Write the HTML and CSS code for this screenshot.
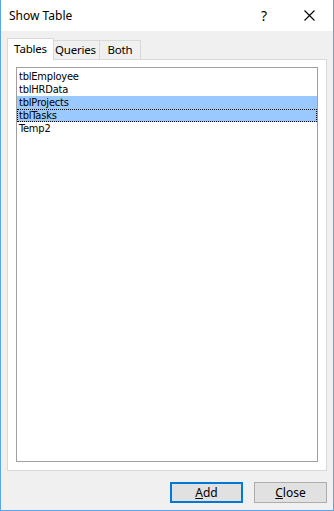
FILE: index.html
```html
<!DOCTYPE html>
<html lang="en">
<head>
    <meta charset="UTF-8">
    <title>Show Table</title>
    <link rel="stylesheet" href="styles.css">
</head>
<body>
    <div class="dialog">
        <div class="title-bar">
            <span class="title">Show Table</span>
            <span class="help-btn">?</span>
            <span class="close-btn">
                <svg width="11" height="11" viewBox="0 0 11 11">
                    <path d="M0.5 0.5 L10.5 10.5 M10.5 0.5 L0.5 10.5" stroke="#000" stroke-width="1.1" fill="none"/>
                </svg>
            </span>
        </div>

        <div class="dialog-body">
            <div class="tabs">
                <div class="tab active">Tables</div>
                <div class="tab tab-queries">Queries</div>
                <div class="tab tab-both">Both</div>
            </div>

            <div class="tab-panel">
                <div class="table-list">
                    <div class="list-item">tblEmployee</div>
                    <div class="list-item">tblHRData</div>
                    <div class="list-item selected">tblProjects</div>
                    <div class="list-item selected focused">tblTasks</div>
                    <div class="list-item">Temp2</div>
                </div>
            </div>

            <div class="dialog-buttons">
                <button class="btn btn-default"><u>A</u>dd</button>
                <button class="btn"><u>C</u>lose</button>
            </div>
        </div>
    </div>
</body>
</html>
```

FILE: styles.css
```css
* {
    box-sizing: border-box;
}

body {
    margin: 0;
    font-family: "Noto Sans", "Open Sans", sans-serif;
    background: #fff;
}

.dialog {
    width: 334px;
    height: 511px;
    border: 1px solid #5ba7e5;
    border-top: none;
    display: flex;
    flex-direction: column;
    background: #f0f0f0;
}

.title-bar {
    height: 31px;
    background: #fff;
    display: flex;
    align-items: center;
    padding-left: 8px;
    font-size: 12px;
    color: #000;
}

.title {
    flex: 1;
}

.help-btn {
    font-size: 14px;
    margin-right: 37px;
}

.close-btn {
    display: flex;
    align-items: center;
    margin-right: 18px;
}

.dialog-body {
    flex: 1;
    display: flex;
    flex-direction: column;
    padding: 7px 6px 7px 6px;
}

.tabs {
    display: flex;
    align-items: flex-end;
    height: 21px;
    padding-left: 2px;
    position: relative;
    z-index: 1;
    font-size: 11.5px;
}

.tab {
    height: 19px;
    border: 1px solid #d9d9d9;
    border-bottom: none;
    background: #f0f0f0;
    text-align: center;
    line-height: 18px;
    margin-left: -1px;
    letter-spacing: -0.2px;
}

.tab.active {
    width: 47px;
    height: 22px;
    background: #fff;
    padding-top: 1px;
    margin-left: -2px;
    margin-right: -2px;
    margin-bottom: -1px;
    position: relative;
    z-index: 2;
}

.tab-queries {
    width: 49px;
}

.tab-both {
    width: 42px;
}

.tab-panel {
    flex: 1;
    background: #fff;
    border: 1px solid #d9d9d9;
    padding: 7px 8px 8px 8px;
    display: flex;
}

.table-list {
    flex: 1;
    border: 1px solid #a0a0a0;
    padding-top: 2px;
    font-family: "DejaVu Sans Condensed", "DejaVu Sans", sans-serif;
    font-size: 11px;
    letter-spacing: -0.2px;
}

.list-item {
    height: 13px;
    line-height: 13px;
    padding-left: 2px;
    color: #000;
}

.list-item.selected {
    background: #99c9ff;
}

.list-item.focused {
    outline: 1px dotted #000;
    outline-offset: -1px;
}

.dialog-buttons {
    display: flex;
    justify-content: flex-end;
    gap: 11px;
    padding-top: 11px;
}

.btn {
    width: 73px;
    height: 21px;
    background: #e1e1e1;
    border: 1px solid #adadad;
    font-family: "Noto Sans", "Open Sans", sans-serif;
    font-size: 12px;
    padding: 0;
    color: #000;
}

.btn-default {
    border: 2px solid #0078d7;
}
```
